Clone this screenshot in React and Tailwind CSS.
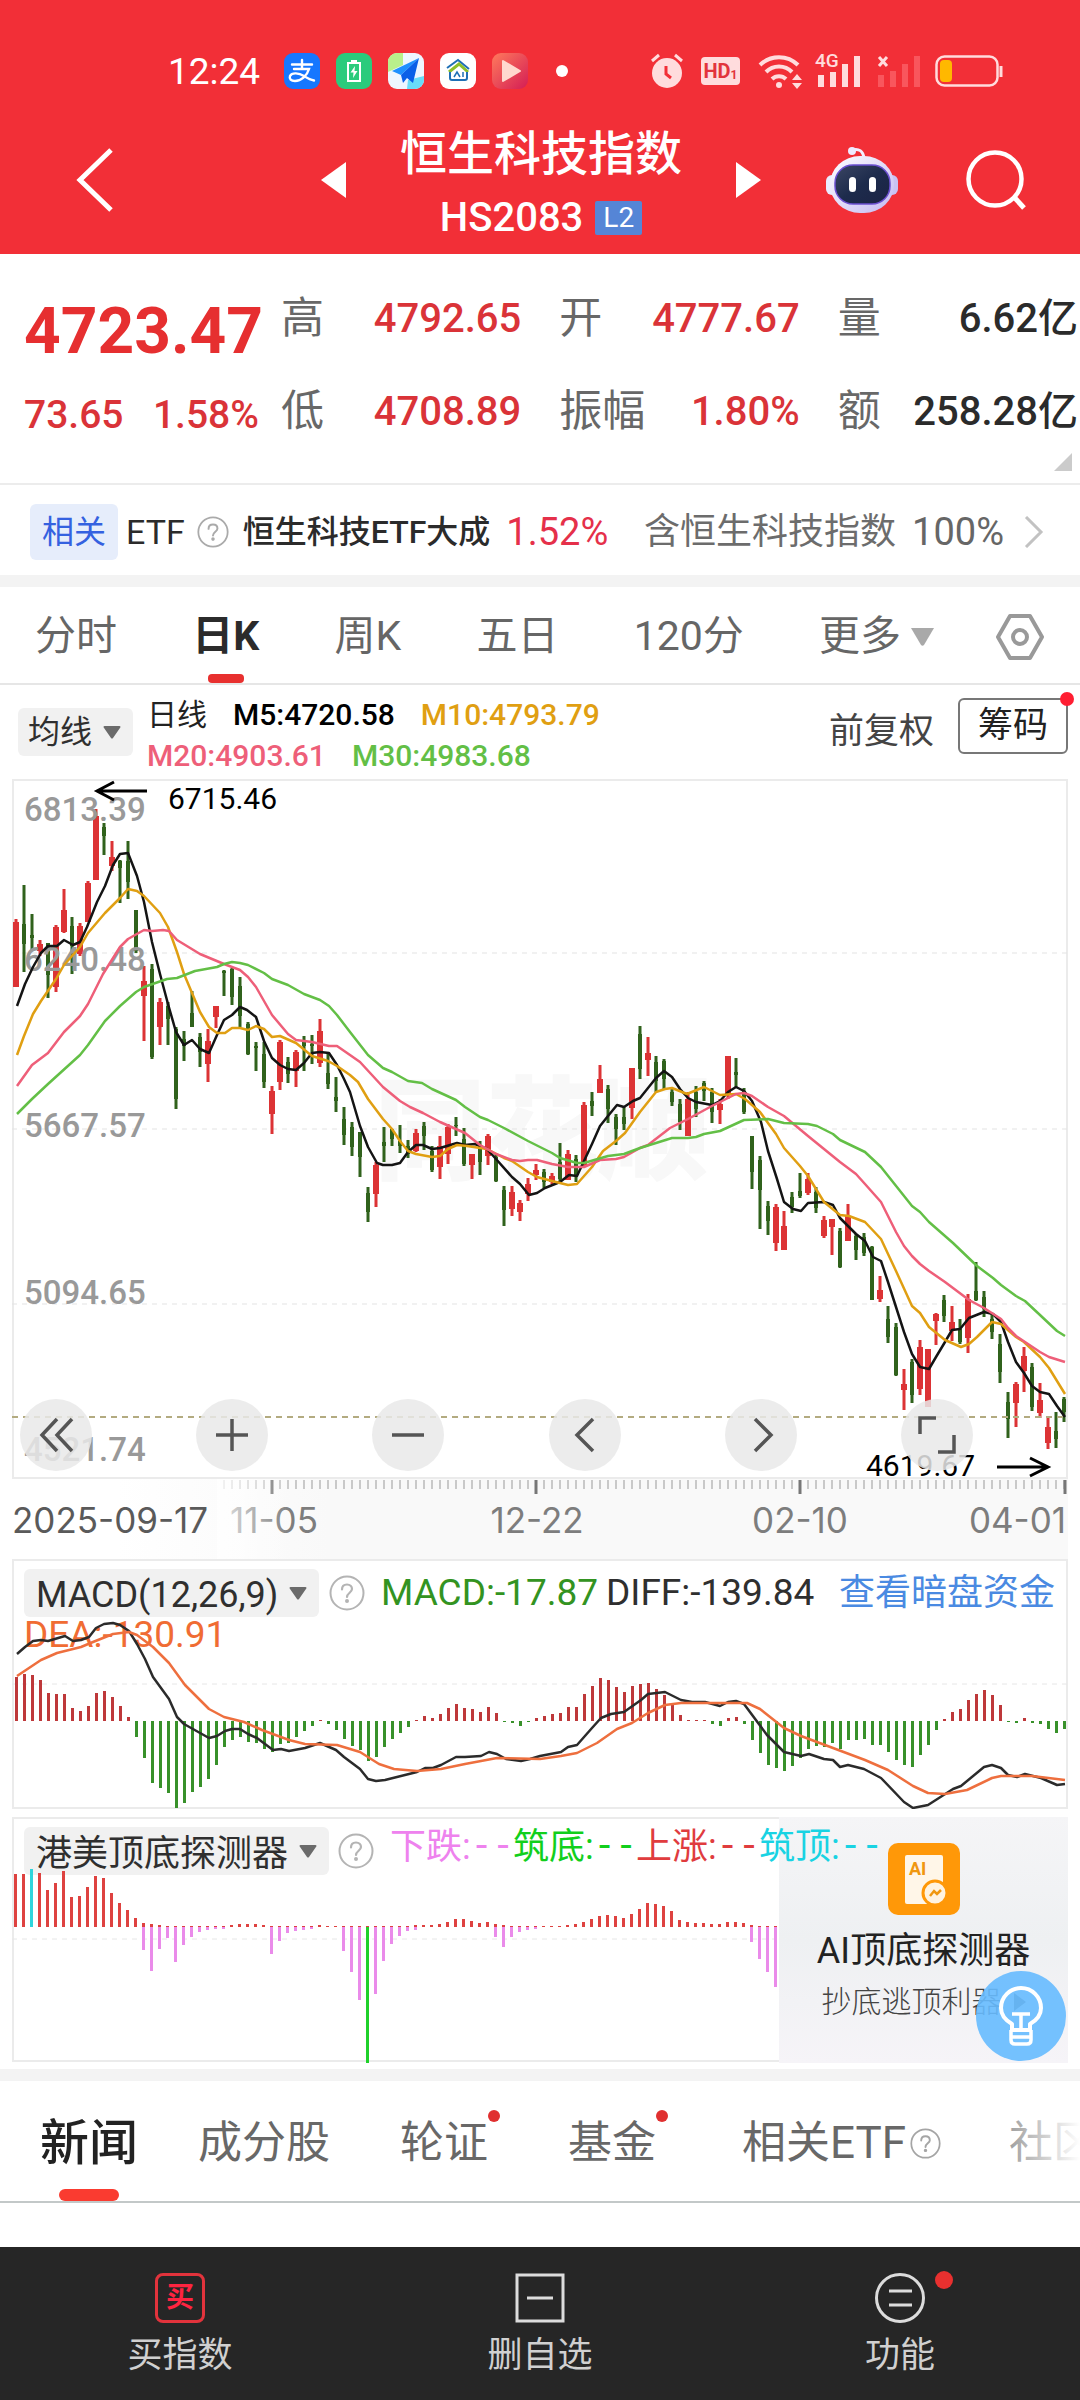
import { useState } from "react";
import clsx from "clsx";

// [high, low, bodyTop, bodyBottom, up]
const CANDLES = [
  [140, 208, 143, 208, 1], [106, 193, 145, 165, 0], [135, 172, 156, 159, 0], [161, 177, 165, 172, 1],
  [164, 219, 164, 196, 0], [146, 213, 148, 208, 1], [110, 154, 131, 153, 1], [138, 195, 147, 167, 0],
  [144, 177, 147, 175, 1], [102, 143, 104, 143, 1], [30, 101, 37, 101, 1], [44, 76, 48, 57, 0],
  [62, 92, 78, 87, 1], [81, 124, 82, 89, 0], [62, 120, 82, 103, 0], [131, 174, 131, 172, 0],
  [187, 262, 202, 217, 1], [185, 280, 190, 278, 0], [219, 266, 223, 248, 1], [223, 266, 227, 240, 0],
  [248, 330, 250, 320, 0], [252, 282, 260, 267, 0], [212, 248, 234, 248, 0], [254, 288, 258, 273, 0],
  [250, 303, 262, 285, 1], [227, 249, 227, 238, 1], [191, 217, 192, 194, 0], [189, 226, 190, 218, 0],
  [198, 248, 207, 237, 0], [243, 276, 245, 275, 0], [263, 292, 267, 269, 0], [263, 309, 275, 303, 0],
  [307, 355, 312, 335, 1], [261, 311, 263, 303, 1], [278, 304, 283, 295, 0], [271, 308, 273, 292, 1],
  [257, 292, 263, 267, 0], [256, 285, 265, 267, 0], [240, 288, 252, 284, 1], [275, 310, 294, 305, 0],
  [298, 333, 318, 322, 0], [328, 366, 340, 356, 0], [343, 377, 348, 368, 0], [353, 398, 353, 378, 0],
  [408, 443, 414, 433, 0], [383, 428, 386, 415, 1], [348, 383, 363, 367, 0], [350, 367, 350, 360, 0],
  [346, 374, 362, 367, 0], [361, 379, 367, 375, 0], [350, 373, 354, 372, 1], [343, 371, 347, 357, 0],
  [367, 393, 372, 391, 0], [357, 400, 367, 388, 1], [345, 385, 348, 375, 1], [338, 357, 346, 347, 0],
  [349, 387, 360, 385, 0], [375, 400, 375, 386, 1], [362, 396, 367, 383, 0], [355, 386, 357, 377, 1],
  [375, 403, 378, 402, 0], [407, 447, 411, 431, 0], [407, 437, 413, 430, 1], [421, 442, 424, 433, 1],
  [399, 422, 405, 415, 1], [385, 401, 391, 396, 1], [390, 409, 393, 403, 0], [394, 405, 397, 403, 1],
  [364, 404, 383, 400, 0], [371, 401, 375, 401, 1], [376, 403, 380, 396, 0], [323, 388, 326, 387, 1],
  [313, 337, 322, 327, 0], [286, 314, 300, 314, 1], [306, 344, 310, 330, 0], [335, 366, 338, 350, 0],
  [328, 351, 338, 345, 0], [289, 340, 289, 329, 1], [247, 300, 255, 290, 0], [258, 297, 274, 281, 1],
  [277, 313, 283, 302, 0], [280, 311, 282, 300, 0], [309, 327, 313, 323, 0], [320, 351, 325, 343, 0],
  [313, 357, 320, 357, 1], [307, 338, 313, 330, 0], [302, 322, 304, 312, 0], [309, 344, 313, 333, 0],
  [320, 345, 325, 331, 1], [277, 320, 277, 315, 1], [279, 308, 293, 296, 0], [309, 335, 312, 333, 0],
  [357, 410, 357, 393, 0], [377, 450, 381, 411, 0], [422, 456, 427, 442, 0], [425, 472, 428, 464, 1],
  [432, 471, 447, 471, 1], [413, 434, 418, 428, 0], [394, 419, 412, 417, 0], [394, 416, 400, 414, 1],
  [408, 434, 413, 429, 0], [437, 459, 441, 457, 1], [440, 476, 440, 448, 1], [449, 489, 452, 488, 0],
  [425, 462, 437, 462, 1], [455, 481, 457, 471, 0], [454, 477, 458, 474, 0], [467, 521, 468, 521, 0],
  [497, 523, 511, 520, 1], [527, 564, 540, 558, 0], [544, 597, 548, 596, 0], [590, 631, 605, 611, 1],
  [580, 624, 583, 616, 0], [561, 616, 568, 610, 1], [570, 628, 570, 628, 1], [534, 566, 535, 542, 1],
  [516, 543, 521, 537, 0], [527, 562, 543, 552, 1], [540, 565, 550, 563, 0], [515, 574, 520, 559, 1],
  [483, 522, 512, 521, 0], [512, 538, 518, 530, 0], [535, 560, 540, 553, 0], [555, 604, 565, 593, 0],
  [613, 659, 623, 640, 0], [603, 648, 605, 624, 1], [568, 613, 577, 592, 1], [584, 632, 588, 628, 0],
  [604, 639, 621, 634, 1], [637, 670, 648, 664, 1], [633, 669, 652, 660, 0], [618, 643, 620, 633, 0],
];

const MA_LINES = [
  {
    color: "#141414",
    points:
      "5,227 13,205 21,188 29,174 36,167 45,167 52,161 61,166 68,163 75,148 85,123 93,107 101,86 108,75 116,74 125,97 132,123 140,163 148,195 156,225 164,253 172,266 180,261 188,270 197,274 205,256 212,241 220,236 228,228 235,231 244,238 252,262 260,279 268,286 276,290 284,291 292,284 300,274 308,273 317,274 325,286 332,300 338,313 348,347 356,368 365,384 371,386 380,386 388,384 396,373 404,366 411,366 420,370 428,369 445,364 453,366 463,365 475,370 484,380 500,398 508,405 517,416 525,414 533,409 548,403 557,396 565,397 572,382 580,365 588,347 596,337 605,326 612,328 621,322 628,319 636,309 644,299 652,292 660,298 668,310 676,319 684,323 700,326 708,322 716,313 724,308 732,312 740,322 749,343 756,372 765,400 772,423 781,430 789,432 796,424 812,423 821,426 828,439 844,455 853,462 861,478 869,482 876,503 884,528 892,553 900,575 908,588 917,590 924,578 933,563 940,551 948,550 957,539 972,533 981,535 989,543 996,563 1004,583 1012,594 1020,607 1028,613 1037,615 1045,627 1053,638",
  },
  {
    color: "#e09f12",
    points:
      "5,276 12,257 21,235 29,222 44,200 52,186 60,177 68,168 76,154 93,134 108,119 116,110 125,112 132,117 148,134 156,148 165,173 172,195 180,214 188,233 197,248 205,254 213,254 220,249 228,249 236,251 244,247 252,250 260,258 268,257 284,264 300,277 316,282 325,287 338,296 346,303 356,320 371,340 380,350 388,362 396,372 404,375 420,378 428,377 436,370 445,366 455,367 475,370 492,379 500,382 516,393 525,398 540,402 556,406 565,405 580,388 591,372 604,362 613,354 628,333 644,313 653,310 660,309 675,315 692,308 708,316 724,315 733,320 748,333 764,355 772,369 788,387 796,397 812,423 828,436 837,437 853,443 869,460 884,492 900,527 908,534 917,548 933,561 949,568 957,565 965,558 980,543 989,545 1004,558 1012,563 1028,578 1037,589 1053,615",
  },
  {
    color: "#ee5f79",
    points:
      "5,307 20,286 36,274 52,253 68,237 76,225 91,195 108,168 116,160 132,151 140,152 151,151 157,152 165,161 188,175 212,185 228,191 236,198 244,208 260,236 276,255 284,261 300,263 317,267 325,267 338,276 348,283 371,308 388,322 398,328 411,334 428,343 453,354 468,366 484,375 500,381 508,382 516,381 525,381 540,385 556,388 572,388 588,381 604,380 612,378 628,369 636,366 658,349 676,340 698,328 708,323 724,315 732,314 740,317 756,328 772,337 796,357 828,383 844,395 853,405 869,423 884,453 892,467 900,477 908,485 917,492 933,503 957,521 972,529 989,540 996,549 1004,557 1028,573 1037,578 1053,583",
  },
  {
    color: "#63bf46",
    points:
      "5,335 20,320 36,305 68,276 76,266 93,242 108,227 124,213 132,208 155,200 165,199 183,192 205,188 212,185 220,183 228,184 236,186 252,194 260,200 276,206 292,215 308,221 317,227 325,236 338,253 356,276 371,289 380,293 396,302 410,304 420,310 444,321 453,328 468,338 476,341 492,349 516,362 540,374 548,379 565,384 572,384 596,377 612,375 628,369 660,359 676,359 684,358 692,355 708,352 732,341 756,340 772,344 796,345 805,347 821,355 828,361 853,373 869,388 900,427 908,433 917,443 941,464 965,487 981,499 989,506 1004,517 1013,522 1028,536 1045,552 1053,557",
  },
];

const MACD_BARS = [
  44, 47, 46, 41, 28, 27, 27, 13, 10, 15, 28, 30, 24, 15, 4, -16, -37, -62, -67, -72, -87, -82, -71, -66, -58,
  -44, -26, -19, -16, -21, -22, -28, -31, -23, -22, -16, -10, -5, 1, -3, -9, -18, -25, -29, -40, -36, -26, -18,
  -12, -6, 1, 5, 3, 7, 13, 17, 13, 12, 9, 14, 8, -1, -2, -5, -1, 3, 5, 7, 8, 14, 14, 27, 35, 43, 41, 34, 29, 35,
  37, 38, 32, 26, 16, 6, 1, 1, 1, -3, -5, 3, 4, -3, -19, -32, -44, -47, -50, -45, -37, -28, -25, -26, -22, -28,
  -19, -19, -18, -24, -24, -31, -39, -44, -46, -34, -24, -9, 2, 9, 12, 21, 27, 31, 26, 16, -1, -2, 3, -2, -3,
  -8, -12, -8,
];

const DIFF_LINE =
  "5,95 13,88 21,82 29,81 36,82 53,77 61,82 69,81 77,78 84,69 92,65 101,64 108,66 117,72 125,85 133,100 141,118 149,129 157,140 165,158 172,165 197,179 205,177 213,172 220,170 228,170 236,175 245,179 261,191 269,190 277,192 293,189 308,184 324,191 332,198 348,210 356,220 364,222 373,221 405,213 413,209 421,209 429,206 444,198 453,198 469,197 477,193 485,195 494,200 509,202 518,200 528,197 549,193 556,188 565,186 580,169 589,159 599,155 612,153 629,141 636,135 653,133 669,141 680,143 693,143 708,147 716,143 724,142 732,145 755,176 772,193 789,197 797,195 812,200 821,201 828,208 836,206 852,210 869,219 892,243 901,249 916,246 941,230 949,227 972,208 980,206 989,209 996,216 1005,218 1013,215 1029,219 1045,226 1053,225";
const DEA_LINE =
  "5,117 29,101 45,94 69,88 81,83 101,75 117,73 125,76 141,88 157,104 173,126 197,150 212,158 232,163 250,171 277,181 293,185 325,186 348,193 367,205 382,210 405,212 429,210 453,205 485,199 528,200 549,197 565,194 585,184 605,170 620,164 636,154 653,146 669,144 735,144 748,150 772,169 789,177 821,189 853,201 876,211 901,227 916,234 933,235 955,231 980,219 989,217 1020,217 1053,221";

const DETECTOR_UP = [
  53, 53, 58, 54, 37, 44, 56, 30, 31, 40, 51, 49, 34, 24, 17, 9, 4, 3, 2, 1, 1, 1, 1, 1, 1, 1, 1, 2, 3, 3, 3, 2, 1,
  1, 1, 1, 1, 1, 2, 1, 1, 1, 1, 1, 1, 1, 1, 1, 1, 1, 2, 2, 2, 3, 5, 8, 8, 6, 4, 5, 3, 2, 1, 1, 1, 1, 1, 1, 1, 2, 3,
  5, 8, 11, 12, 11, 9, 13, 18, 24, 23, 21, 16, 7, 5, 4, 4, 3, 3, 5, 5, 4, 2, 1, 1, 1,
];
const DETECTOR_DOWN = {
  16: 23, 17: 44, 18: 22, 19: 11, 20: 35, 21: 18, 22: 10, 23: 5, 24: 3, 25: 2, 26: 2, 32: 27, 33: 14, 34: 6, 35: 4,
  36: 3, 37: 2, 41: 24, 42: 45, 43: 73, 44: 136, 45: 67, 46: 34, 47: 17, 48: 9, 49: 4, 50: 3, 60: 10, 61: 20,
  62: 10, 63: 5, 64: 3, 65: 2, 92: 15, 93: 32, 94: 45, 95: 60,
};

const barX = (i) => 4 + i * 8;

function HelpIcon({ size, color = "#b4b4b4" }) {
  return (
    <svg width={size} height={size} viewBox="0 0 36 36" fill="none" stroke={color} strokeWidth="2" className="shrink-0">
      <circle cx="18" cy="18" r="16.5" />
      <path d="M13 14.500c0-3 2-5 5-5s5 2 5 4.600c0 3.400-5 4-5 7.900" strokeLinecap="round" strokeWidth="2.200" />
      <circle cx="18" cy="26" r="1" fill={color} />
    </svg>
  );
}

function Caret({ className }) {
  return (
    <svg width="18" height="13" viewBox="0 0 18 13" className={className}>
      <path d="M1.500 0h15a1 1 0 0 1 .8 1.600L10 12a1.300 1.300 0 0 1-2 0L.7 1.600A1 1 0 0 1 1.500 0z" fill="currentColor" />
    </svg>
  );
}

function PickerChip({ label, value, className }) {
  return (
    <label className={clsx("relative inline-flex items-center rounded-md bg-[#f1f1f1] text-[#2f2f2f]", className)}>
      <select aria-label={label} className="h-12 appearance-none bg-transparent pr-10 outline-none">
        <option>{value}</option>
      </select>
      <Caret className="pointer-events-none absolute right-3 text-[#6b6b6b]" />
    </label>
  );
}

function StatusBar() {
  return (
    <div className="flex h-[46px] items-center pl-[168px] pr-[77px] text-white">
      <span className="w-[116px] text-[37px] leading-none">12:24</span>
      <div className="flex items-center gap-4">
        {/* Alipay */}
        <svg width="36" height="36" viewBox="0 0 36 36">
          <rect width="36" height="36" rx="9" fill="#1677ff" />
          <g fill="none" stroke="#fff" strokeWidth="2.400" strokeLinecap="round">
            <path d="M8 11.500h20M18 7v9M10 16h15c-2 7-8 12-14 12-4 0-6-2-5-5 2-4 9-3 14 0 4 2.500 7 4 10 4.500" />
          </g>
        </svg>
        {/* Battery manager */}
        <svg width="36" height="36" viewBox="0 0 36 36">
          <rect width="36" height="36" rx="9" fill="#2bcb7c" />
          <path d="M15 7h6v3h-6z" fill="#fff" />
          <rect x="12" y="10" width="12" height="18" fill="none" stroke="#fff" strokeWidth="2" />
          <path d="M19 13l-4.500 6.500h3L17 25l4.500-7h-3z" fill="#fff" />
        </svg>
        {/* Maps */}
        <svg width="36" height="36" viewBox="0 0 36 36">
          <rect width="36" height="36" rx="9" fill="#eef6ff" />
          <path d="M9 0h6v12L0 19V9a9 9 0 0 1 9-9z" fill="#b9f08b" />
          <path d="M20 27l16-4v4a9 9 0 0 1-9 9h-8z" fill="#69dcf8" />
          <path d="M31 5L4 18l9 4z" fill="#1e90ff" />
          <path d="M31 5L13 22l2 8 4-5 6 5z" fill="#0a5fe8" />
        </svg>
        {/* Smart home */}
        <svg width="36" height="36" viewBox="0 0 36 36">
          <rect width="36" height="36" rx="9" fill="#fff" />
          <g fill="none" strokeWidth="2">
            <path d="M7 15L18 7l11 9" stroke="#1f6fb5" />
            <path d="M9 19l10-8 9 8" stroke="#8cbf2a" strokeWidth="3" />
            <path d="M10 19v6a2 2 0 0 0 2 2h13a2 2 0 0 0 2-2v-6" stroke="#1f6fb5" />
            <path d="M14 24l3-5 3 5M23 19v5" stroke="#1f6fb5" strokeWidth="1.500" />
          </g>
        </svg>
        {/* Video */}
        <svg width="36" height="36" viewBox="0 0 36 36">
          <defs>
            <linearGradient id="video" x1="0" y1="0" x2="1" y2="1">
              <stop offset="0" stopColor="#ff7a5c" />
              <stop offset="1" stopColor="#d41d55" />
            </linearGradient>
          </defs>
          <rect width="36" height="36" rx="9" fill="url(#video)" />
          <path d="M11 8v20l17-10z" fill="#ffd9cf" stroke="#ffd9cf" strokeWidth="2" strokeLinejoin="round" />
        </svg>
      </div>
      <span className="ml-7 size-3 rounded-full bg-white" />

      <div className="ml-auto flex items-center text-[#ffdcdd]">
        {/* Alarm */}
        <svg width="32" height="36" viewBox="0 0 32 36">
          <circle cx="16" cy="20" r="15" fill="currentColor" />
          <path d="M1 8l7-6M31 8l-7-6" stroke="currentColor" strokeWidth="3" />
          <path d="M15 13v8l5 4" fill="none" stroke="#f22f37" strokeWidth="3" />
        </svg>
        <span className="ml-[18px] flex h-7 w-[39px] items-center justify-center rounded-sm bg-[#ffdcdd] text-[20px] leading-none font-bold text-[#e2343c]">
          HD<span className="self-end pb-1 text-[12px]">1</span>
        </span>
        {/* Wi-Fi */}
        <svg width="45" height="36" viewBox="0 0 45 36" fill="none" stroke="currentColor" strokeWidth="4" className="ml-[18px]">
          <path d="M2 12a27 27 0 0 1 38 0M8 19a18 18 0 0 1 26 0M14 26a10 10 0 0 1 14 0" />
          <circle cx="21" cy="32" r="3" fill="currentColor" stroke="none" />
          <path d="M34 27l5-6 5 6zM34 30l5 6 5-6z" fill="currentColor" stroke="none" />
        </svg>
        <div className="relative ml-3 h-9 w-[46px]">
          <span className="absolute -top-0.5 left-0 text-[19px] leading-5 font-medium">4G</span>
          <svg width="46" height="36" viewBox="0 0 46 36" fill="currentColor">
            <rect x="3" y="22" width="6" height="12" />
            <rect x="15" y="19" width="6" height="15" />
            <rect x="27" y="11" width="6" height="23" />
            <rect x="39" y="3" width="6" height="31" />
          </svg>
        </div>
        <svg width="45" height="36" viewBox="0 0 45 36" className="ml-4">
          <path d="M2 4l8 9M10 4l-8 9" stroke="currentColor" strokeWidth="3" />
          <g fill="#f9565d">
            <rect x="1" y="22" width="6" height="12" />
            <rect x="13" y="18" width="6" height="16" />
            <rect x="25" y="11" width="6" height="23" />
            <rect x="37" y="3" width="6" height="31" />
          </g>
        </svg>
        <svg width="68" height="32" viewBox="0 0 68 32" className="ml-[13px]">
          <rect x="1.500" y="1.500" width="61" height="29" rx="8" fill="none" stroke="currentColor" strokeWidth="2.500" />
          <rect x="5" y="5" width="12" height="22" rx="4" fill="#ffb800" />
          <path d="M66 11v11" stroke="currentColor" strokeWidth="3" />
        </svg>
      </div>
    </div>
  );
}

function Robot() {
  return (
    <svg width="72" height="68" viewBox="0 0 72 68">
      <defs>
        <linearGradient id="shell" x1="0" y1="0" x2="1" y2="1">
          <stop offset="0" stopColor="#ffffff" />
          <stop offset="1" stopColor="#c3b9f2" />
        </linearGradient>
        <linearGradient id="face" x1="0" y1="0" x2="1" y2="1">
          <stop offset="0" stopColor="#3b4663" />
          <stop offset="0.500" stopColor="#1d2b4c" />
          <stop offset="1" stopColor="#1b2344" />
        </linearGradient>
      </defs>
      <path d="M26 4c7-2 11 1 12 8" fill="none" stroke="#f3efff" strokeWidth="3" />
      <circle cx="26" cy="5" r="4" fill="#efeaff" />
      <rect x="0" y="29" width="12" height="20" rx="6" fill="#e9ecff" />
      <rect x="60" y="29" width="12" height="20" rx="6" fill="#c9c2f3" />
      <rect x="4" y="10" width="64" height="57" rx="30" fill="url(#shell)" />
      <rect x="9" y="19" width="55" height="39" rx="18" fill="url(#face)" stroke="#6a4fd0" strokeWidth="1.500" />
      <rect x="23" y="31" width="7" height="15" rx="3.500" fill="#fff" />
      <rect x="43" y="31" width="7" height="15" rx="3.500" fill="#fff" />
    </svg>
  );
}

function Header() {
  return (
    <header className="bg-[#f22f37] pt-12">
      <StatusBar />
      <div className="flex h-40 items-center justify-between pt-3 pr-[54px] pl-[76px] text-white">
        <button aria-label="返回">
          <svg width="38" height="64" viewBox="0 0 38 64" fill="none" stroke="currentColor" strokeWidth="5">
            <path d="M35 2L4 32l31 30" />
          </svg>
        </button>
        <div className="flex items-center gap-[54px] pl-[142px]">
          <button aria-label="上一个">
            <svg width="25" height="36" viewBox="0 0 25 36" fill="currentColor">
              <path d="M25 0v36L0 18z" />
            </svg>
          </button>
          <div className="flex flex-col items-center pt-2 whitespace-nowrap">
            <h1 className="text-[47px] leading-[68px] font-medium">恒生科技指数</h1>
            <div className="flex items-center gap-3">
              <span className="text-[40px] leading-[60px] font-medium">HS2083</span>
              <span className="rounded-xs bg-[#5585d6] px-2 text-[28px] leading-[34px]">L2</span>
            </div>
          </div>
          <button aria-label="下一个">
            <svg width="25" height="36" viewBox="0 0 25 36" fill="currentColor">
              <path d="M0 0v36l25-18z" />
            </svg>
          </button>
        </div>
        <div className="flex items-center gap-[68px]">
          <button aria-label="智能助手">
            <Robot />
          </button>
          <button aria-label="搜索">
            <svg width="60" height="60" viewBox="0 0 60 60" fill="none" stroke="currentColor" strokeWidth="4.500">
              <circle cx="29" cy="29" r="26.500" />
              <path d="M48 47l10 11" strokeWidth="5" />
            </svg>
          </button>
        </div>
      </div>
    </header>
  );
}

function Stat({ label, value, dark }) {
  return (
    <div className="flex h-[93px] items-center justify-between whitespace-nowrap">
      <span className="text-[43px] text-[#686868]">{label}</span>
      <span className={clsx("text-[40px] font-medium", dark ? "text-[#2b2b2b]" : "text-[#da3338]")}>{value}</span>
    </div>
  );
}

function Quote() {
  return (
    <section className="relative flex border-b-2 border-[#ececec] pt-[18px] pr-0.5 pb-[25px] pl-6">
      <div className="mr-[22px] w-[235px] text-[#da3338]">
        <div className="flex h-[120px] items-center text-[64px] font-bold text-[#e62f30]">4723.47</div>
        <div className="flex h-[46px] items-center justify-between text-[39px] font-medium">
          <span>73.65</span>
          <span>1.58%</span>
        </div>
      </div>
      <div className="grid flex-1 grid-cols-3 gap-x-[38px]">
        <Stat label="高" value="4792.65" />
        <Stat label="开" value="4777.67" />
        <Stat label="量" value="6.62亿" dark />
        <Stat label="低" value="4708.89" />
        <Stat label="振幅" value="1.80%" />
        <Stat label="额" value="258.28亿" dark />
      </div>
      <svg width="18" height="18" viewBox="0 0 18 18" className="absolute right-2 bottom-3">
        <path d="M18 0v18H0z" fill="#cbcbcb" />
      </svg>
    </section>
  );
}

function RelatedEtf() {
  return (
    <a href="#etf" className="flex h-[90px] items-center pt-1 pr-9 pl-[30px] whitespace-nowrap text-[#2b2b2b]">
      <span className="rounded-md bg-[#e6edfb] px-3 text-[32px] leading-14 text-[#3461e0]">相关</span>
      <span className="ml-2 text-[34px]">ETF</span>
      <span className="ml-3">
        <HelpIcon size={32} color="#aaaaaa" />
      </span>
      <span className="ml-3.5 text-[32px] font-medium">恒生科技ETF大成</span>
      <span className="ml-4 text-[38px] text-[#e5304a]">1.52%</span>
      <span className="ml-auto text-[36px] text-[#6c6c6c]">含恒生科技指数</span>
      <span className="ml-4 text-[38px] text-[#666]">100%</span>
      <svg width="20" height="32" viewBox="0 0 20 32" fill="none" stroke="#c2c2c2" strokeWidth="3" className="ml-5">
        <path d="M2 1l15 15L2 31" />
      </svg>
    </a>
  );
}

const PERIODS = ["分时", "日K", "周K", "五日", "120分"];

function PeriodTabs() {
  const [active, setActive] = useState("日K");

  return (
    <nav className="flex h-[98px] items-center justify-between border-b-2 border-[#e6e6e6] pr-9 pl-[35px] text-[41px] text-[#666]">
      {PERIODS.map((p) => (
        <button
          key={p}
          onClick={() => setActive(p)}
          className={clsx("relative h-full pt-1", p === active && "font-bold text-[#2b2b2b]")}
        >
          {p}
          {p === active && (
            <span className="absolute bottom-0 left-1/2 h-[9px] w-9 -translate-x-1/2 rounded-sm bg-[#e8302f]" />
          )}
        </button>
      ))}
      <div className="flex items-center gap-[62px] pt-1">
        <button className="flex items-center gap-2.5">
          更多
          <svg width="23" height="18" viewBox="0 0 23 18">
            <path d="M0 0h23L13 17q-1.500 1.500-3 0z" fill="#a9a9a9" />
          </svg>
        </button>
        <button aria-label="设置">
          <svg width="48" height="46" viewBox="0 0 48 46" fill="none" stroke="#999" strokeWidth="4" strokeLinejoin="round">
            <path d="M14 2h20l12 21-12 21H14L2 23z" />
            <circle cx="24" cy="23" r="7" />
          </svg>
        </button>
      </div>
    </nav>
  );
}

function MaLegend() {
  return (
    <div className="flex h-[94px] items-center pr-3 pl-[18px]">
      <PickerChip label="主图指标" value="均线" className="pl-2.5 text-[32px]" />
      <div className="ml-3.5 pt-1.5 text-[30px] leading-[41px] whitespace-nowrap">
        <div className="flex gap-[26px]">
          <span className="text-[#222]">日线</span>
          <span className="font-medium text-black">M5:4720.58</span>
          <span className="font-medium text-[#e09f12]">M10:4793.79</span>
        </div>
        <div className="flex gap-[26px] font-medium">
          <span className="text-[#ee5f79]">M20:4903.61</span>
          <span className="text-[#63bf46]">M30:4983.68</span>
        </div>
      </div>
      <button className="ml-auto text-[35px] text-[#444]">前复权</button>
      <button className="relative -mt-3 ml-6 rounded-md border-2 border-[#777] px-[18px] text-[35px] leading-[52px] text-[#222]">
        筹码
        <span className="absolute -top-2 -right-2 size-3.5 rounded-full bg-[#ff1e32]" />
      </button>
    </div>
  );
}

const TOOLS = [
  { name: "最左", d: "M18 1L3 17l15 16M33 1L18 17l15 16" },
  { name: "放大", d: "M17 1v32M1 17h32" },
  { name: "缩小", d: "M1 17h32" },
  { name: "左移", d: "M25 1L9 17l16 16" },
  { name: "右移", d: "M11 1l16 16-16 16" },
  { name: "全屏", d: "M0 16V0h16M34 17v17H18" },
];

function PriceChart() {
  return (
    <div className="relative">
      <svg viewBox="0 0 1056 700" className="block h-auto w-full overflow-visible">
        <text x="362" y="392" fontSize="112" fontWeight="900" fill="#f8f8f8">同花顺</text>
        <rect x="1" y="1" width="1054" height="698" fill="none" stroke="#ebebeb" strokeWidth="2" />
        {[174, 350, 525].map((y) => (
          <line key={y} x1="0" x2="1056" y1={y} y2={y} stroke="#e3e3e3" strokeWidth="1" strokeDasharray="5 5" />
        ))}
        {CANDLES.map(([high, low, top, bottom, up], i) => {
          const w = up ? 6 : 4;
          return (
            <g key={i} fill={up ? "#dc3335" : "#30621c"}>
              <rect x={barX(i) - 1.5} y={high} width="3" height={low - high} />
              <rect x={barX(i) - w / 2} y={top} width={w} height={Math.max(bottom - top, 1)} />
            </g>
          );
        })}
        <g fill="#999" fontSize="33" fontWeight="500">
          <text x="12" y="42">6813.39</text>
          <text x="12" y="192">6240.48</text>
          <text x="12" y="358">5667.57</text>
          <text x="12" y="525">5094.65</text>
          <text x="12" y="682">4521.74</text>
        </g>
        {MA_LINES.map((l) => (
          <polyline key={l.color} points={l.points} fill="none" stroke={l.color} strokeWidth="2.5" strokeLinejoin="round" />
        ))}
        <line x1="0" x2="1056" y1="638" y2="638" stroke="#b3ab80" strokeWidth="2" strokeDasharray="6 5" />
        <g fontSize="30" fill="#000">
          <text x="156" y="30">6715.46</text>
          <text x="854" y="697">4619.67</text>
        </g>
        <g fill="none" stroke="#000" strokeWidth="3">
          <path d="M135 12H85M102 3L85 12l17 9" />
          <path d="M985 688h50M1018 679l18 9-18 9" />
        </g>
      </svg>
      <div className="absolute inset-x-2 bottom-2 flex justify-between pr-[87px]">
        {TOOLS.map((t) => (
          <button
            key={t.name}
            aria-label={t.name}
            className="flex size-[72px] items-center justify-center rounded-full bg-[#e9e9e9]/85"
          >
            <svg width="34" height="34" viewBox="0 0 34 34" fill="none" stroke="#555" strokeWidth="3.500" className="overflow-visible">
              <path d={t.d} />
            </svg>
          </button>
        ))}
      </div>
    </div>
  );
}

const MONTH_TICKS = [260, 524, 788, 1053];

function TimeAxis() {
  return (
    <svg viewBox="0 0 1056 80" className="block h-auto w-full">
      <defs>
        <linearGradient id="axis" x1="0" x2="1" y1="0" y2="0">
          <stop offset="0.100" stopColor="#fff" />
          <stop offset="0.300" stopColor="#f9f9f9" />
        </linearGradient>
        <linearGradient id="fade" x1="0" x2="1" y1="0" y2="0">
          <stop offset="0" stopColor="#fff" stopOpacity="0.800" />
          <stop offset="1" stopColor="#fff" stopOpacity="0" />
        </linearGradient>
      </defs>
      <rect width="1056" height="80" fill="url(#axis)" />
      {Array.from({ length: 106 }, (_, i) => (
        <line key={i} x1={212 + i * 8} x2={212 + i * 8} y1="1" y2="10" stroke="#999" strokeWidth="1" />
      ))}
      {MONTH_TICKS.map((x) => (
        <line key={x} x1={x} x2={x} y1="1" y2="15" stroke="#777" strokeWidth="3" />
      ))}
      <g fontSize="35" fontFamily="Inter, sans-serif" fill="#7d7d7d">
        <text x="0" y="54" fill="#5a5a5a">2025-09-17</text>
        <text x="262" y="54" textAnchor="middle">11-05</text>
        <text x="525" y="54" textAnchor="middle">12-22</text>
        <text x="788" y="54" textAnchor="middle">02-10</text>
        <text x="1054" y="54" textAnchor="end">04-01</text>
      </g>
      <rect x="205" width="75" height="80" fill="url(#fade)" />
    </svg>
  );
}

function MacdPanel() {
  return (
    <div className="relative">
      <svg viewBox="0 0 1056 250" className="block h-auto w-full">
        <rect x="1" y="1" width="1054" height="248" fill="none" stroke="#ebebeb" strokeWidth="2" />
        <line x1="0" x2="1056" y1="125" y2="125" stroke="#e6e6e6" strokeDasharray="5 5" />
        {MACD_BARS.map((v, i) => (
          <rect
            key={i}
            x={barX(i) - 1}
            y={v > 0 ? 162 - v : 162}
            width="3"
            height={Math.abs(v)}
            fill={v > 0 ? "#be383a" : "#38912a"}
          />
        ))}
      </svg>
      <div className="absolute inset-x-3 top-2 text-[37px] leading-[52px] whitespace-nowrap">
        <div className="flex items-center">
          <PickerChip label="副图指标" value="MACD(12,26,9)" className="pl-3 text-[36px]" />
          <button aria-label="MACD说明" className="ml-2.5">
            <HelpIcon size={36} />
          </button>
          <span className="ml-4 text-[#339321]">MACD:-17.87</span>
          <span className="ml-2 text-[#2f2f2f]">DIFF:-139.84</span>
          <a href="#flow" className="mr-px ml-auto text-[36px] text-[#4a8ae2]">查看暗盘资金</a>
        </div>
        <div className="leading-8 text-[#f06c33]">DEA:-130.91</div>
      </div>
      <svg viewBox="0 0 1056 250" fill="none" strokeWidth="2.500" strokeLinejoin="round" className="pointer-events-none absolute inset-0 h-auto w-full">
        <polyline points={DIFF_LINE} stroke="#2b2b2b" />
        <polyline points={DEA_LINE} stroke="#ee6f3e" />
      </svg>
    </div>
  );
}

const SIGNALS = [
  { name: "下跌:", color: "text-[#ee82ee]" },
  { name: "筑底:", color: "text-[#12cf1c]" },
  { name: "上涨:", color: "text-[#e03c3e]" },
  { name: "筑顶:", color: "text-[#19d3e3]" },
];

function DetectorPanel() {
  return (
    <div className="relative mt-2">
      <svg viewBox="0 0 1056 246" className="block h-auto w-full">
        <rect x="1" y="1" width="1054" height="243" fill="none" stroke="#ebebeb" strokeWidth="2" />
        <line x1="0" x2="1056" y1="122" y2="122" stroke="#e6e6e6" strokeDasharray="5 5" />
      </svg>
      <div className="absolute top-2.5 left-3">
        <PickerChip label="副图指标二" value="港美顶底探测器" className="pl-3 text-[36px]" />
      </div>
      <svg viewBox="0 0 1056 246" className="pointer-events-none absolute inset-0 h-auto w-full">
        {DETECTOR_UP.map((v, i) => (
          <rect key={i} x={barX(i) - 2} y={110 - v} width="3" height={v} fill={i === 2 ? "#2fd5dc" : "#de4240"} />
        ))}
        {Object.entries(DETECTOR_DOWN).map(([i, v]) => (
          <rect key={i} x={barX(Number(i)) - 2} y="110" width="3" height={v} fill={i === "44" ? "#1fd12a" : "#ea8bea"} />
        ))}
      </svg>

      <a
        href="#detector"
        className="absolute inset-y-0 right-0 flex w-[289px] flex-col items-center bg-linear-to-b from-[#f5f5f7] via-[#eef0f2] to-[#f6f4f8] pt-[26px]"
      >
        <svg width="72" height="72" viewBox="0 0 72 72">
          <rect width="72" height="72" rx="10" fill="#ff9808" />
          <rect x="17" y="12" width="38" height="49" rx="2" fill="#fff6e8" />
          <text x="21" y="32" fontSize="18" fontWeight="700" fill="#f0970f">AI</text>
          <circle cx="47" cy="50" r="12" fill="#fff3e0" stroke="#ff9808" strokeWidth="3" />
          <path d="M42 53l4-5 3 3 4-4" fill="none" stroke="#f0970f" strokeWidth="2.500" />
        </svg>
        <span className="mt-2 text-[36px] leading-[56px] text-[#222]">AI顶底探测器</span>
        <span className="flex items-center gap-3 text-[30px] leading-[46px] font-light text-[#444]">
          抄底逃顶利器
          <svg width="12" height="18" viewBox="0 0 12 18">
            <path d="M0 0v18l12-9z" fill="#666" />
          </svg>
        </span>
      </a>

      <div className="absolute top-3.5 left-3 flex items-center text-[36px] leading-12 whitespace-nowrap">
        <div className="flex pl-[314px]">
          <button aria-label="探测器说明">
            <HelpIcon size={36} />
          </button>
        </div>
        <div className="-mt-2 ml-4 flex">
          {SIGNALS.map((s) => (
            <span key={s.name} className={clsx("flex w-[123px]", s.color)}>
              {s.name}
              <span className="font-['Liberation_Mono',monospace]">--</span>
            </span>
          ))}
        </div>
      </div>

      <button
        aria-label="小贴士"
        className="absolute right-0.5 bottom-0.5 flex size-[90px] items-center justify-center rounded-full bg-[#66bbff]/90"
      >
        <svg width="44" height="60" viewBox="0 0 44 60" fill="none" stroke="#fff" strokeWidth="4" strokeLinejoin="round">
          <path d="M13 44v-6C6 34 2 29 2 22a20 20 0 0 1 40 0c0 7-4 12-11 16v6z" />
          <path d="M12 44v10q0 4 4 4h12q4 0 4-4V44M13 51h18M13 28h18M22 28v16" strokeWidth="3.500" />
        </svg>
      </button>
    </div>
  );
}

function NewsTabs() {
  return (
    <nav className="relative flex h-[122px] items-center gap-[60px] overflow-hidden border-b-2 border-[#c3c8c8] pl-10 text-[44px] whitespace-nowrap text-[#686868]">
      <button className="relative h-full pt-1.5 text-[49px] font-medium text-[#222]">
        新闻
        <span className="absolute bottom-0 left-1/2 h-3 w-[60px] -translate-x-1/2 rounded-full bg-[#fa3b30]" />
      </button>
      <button className="pt-1">成分股</button>
      {["轮证", "基金"].map((t) => (
        <button key={t} className="relative px-2.5 pt-1">
          {t}
          <span className="absolute top-1 -right-0.5 size-3 rounded-full bg-[#e03030]" />
        </button>
      ))}
      <button className="flex items-center gap-1 pt-1 pr-2 pl-4">
        相关ETF
        <HelpIcon size={31} color="#a5a5a5" />
      </button>
      <button className="pt-1">社区</button>
      <div className="pointer-events-none absolute inset-y-0 right-0 w-[90px] bg-linear-to-r from-white/20 to-white" />
    </nav>
  );
}

function BottomBar() {
  return (
    <footer className="mt-auto grid h-[153px] grid-cols-3 bg-[#262626] text-[35px] leading-[46px] text-[#d0d0d0]">
      <button className="flex flex-col items-center gap-2.5 pt-[26px]">
        <span className="flex size-[50px] items-center justify-center rounded-lg border-3 border-[#e2333c] text-[28px] leading-none font-bold text-[#ff2440]">
          买
        </span>
        买指数
      </button>
      <button className="flex flex-col items-center gap-2.5 pt-[26px]">
        <svg width="50" height="50" viewBox="0 0 50 50" fill="none" stroke="#dcdcdc" strokeWidth="3">
          <rect x="2" y="2" width="46" height="46" />
          <path d="M12 25h26" />
        </svg>
        删自选
      </button>
      <button className="flex flex-col items-center gap-2.5 pt-[26px]">
        <span className="relative">
          <svg width="50" height="50" viewBox="0 0 50 50" fill="none" stroke="#dcdcdc" strokeWidth="3">
            <circle cx="25" cy="25" r="23.500" />
            <path d="M14 18h23M14 32h23" />
          </svg>
          <span className="absolute -top-0.5 -right-7 size-[18px] rounded-full bg-[#e8302f]" />
        </span>
        功能
      </button>
    </footer>
  );
}

export default function App() {
  return (
    <div className="flex min-h-screen flex-col overflow-x-hidden bg-white font-['Roboto','Noto_Sans_CJK_SC',sans-serif]">
      <Header />
      <main>
        <Quote />
        <RelatedEtf />
        <div className="h-3 bg-[#f3f3f3]" />
        <PeriodTabs />
        <MaLegend />
        <div className="px-3">
          <PriceChart />
          <TimeAxis />
          <MacdPanel />
          <DetectorPanel />
        </div>
        <div className="mt-1.5 h-3 bg-[#f3f3f3]" />
        <NewsTabs />
      </main>
      <BottomBar />
    </div>
  );
}
